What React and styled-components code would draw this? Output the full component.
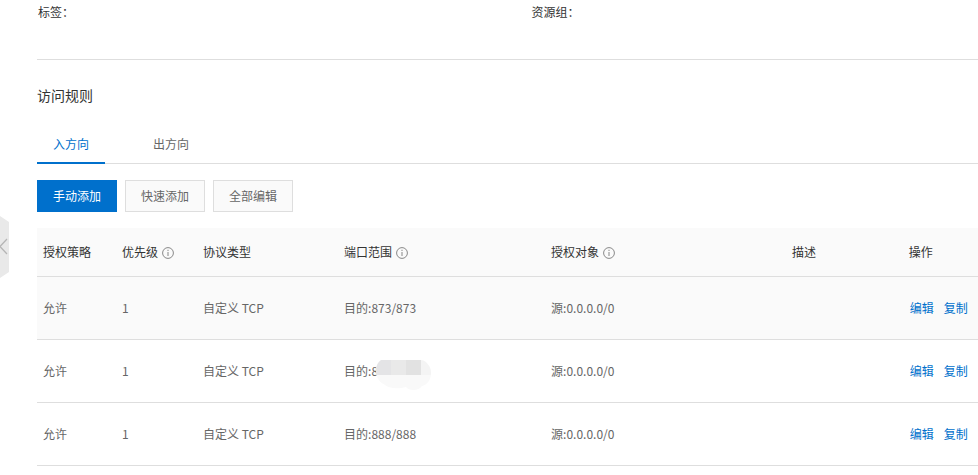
import React, { useState } from "react";
import styled, { createGlobalStyle } from "styled-components";

const GlobalStyle = createGlobalStyle`
	* {
		box-sizing: border-box;
	}

	body {
		margin: 0;
		background: #fff;
		color: #333;
		font-family: "Noto Sans CJK SC", sans-serif;
		font-size: 12px;
		line-height: 18px;
	}

	button {
		font-family: inherit;
		font-size: inherit;
		line-height: inherit;
		cursor: pointer;
	}
`;

// --------------------------------------------------

const Page = styled.div`
	position: relative;
	padding-left: 37px;
`;

const CollapseButton = styled.button`
	position: absolute;
	top: 216px;
	left: 0;
	padding: 0;
	border: 0;
	background: none;

	svg {
		display: block;
	}
`;

const Details = styled.dl`
	display: grid;
	grid-template-columns: 21fr 19fr;
	margin: 0;
	padding: 3px 0 38px 1px;
	border-bottom: 1px solid #dedede;
`;

const DetailLabel = styled.dt`
	color: #333;
`;

const Title = styled.h2`
	margin: 25px 0 21px;
	font-size: 14px;
	font-weight: 400;
	line-height: 20px;
`;

const Tabs = styled.div`
	display: flex;
	gap: 32px;
	border-bottom: 1px solid #dedede;
`;

const Tab = styled.button`
	margin-bottom: -1px;
	padding: 9px 16px;
	border: 0;
	border-bottom: 2px solid ${({ $active }) => ($active ? "#0070cc" : "transparent")};
	background: none;
	color: ${({ $active }) => ($active ? "#0070cc" : "#666")};
`;

const Toolbar = styled.div`
	display: flex;
	gap: 8px;
	padding: 16px 0;
`;

const Button = styled.button`
	padding: 6px 15px;
	border: 1px solid ${({ $primary }) => ($primary ? "#0070cc" : "#dedede")};
	background: ${({ $primary }) => ($primary ? "#0070cc" : "#fafafa")};
	color: ${({ $primary }) => ($primary ? "#fff" : "#666")};
`;

// --------------------------------------------------

const Table = styled.table`
	width: 100%;
	table-layout: fixed;
	border-collapse: separate;
	border-spacing: 0;
`;

const HeadCell = styled.th`
	width: ${({ $width }) => $width};
	padding: 15px 0 15px 6px;
	border-bottom: 1px solid #dedede;
	background: #fafafa;
	font-weight: 400;
	text-align: left;
	white-space: nowrap;
`;

const HeadLabel = styled.span`
	display: flex;
	align-items: center;
	gap: 4px;

	svg {
		margin-top: 2px;
	}
`;

const Row = styled.tr`
	background: ${({ $highlighted }) => ($highlighted ? "#fafafa" : "#fff")};
`;

const Cell = styled.td`
	padding: 22px 0 22px 6px;
	border-bottom: 1px solid #dedede;
	color: #666;
	white-space: nowrap;
`;

const Actions = styled.div`
	display: flex;
	gap: 10px;
	padding-left: 1px;
`;

const ActionLink = styled.a`
	color: #0070cc;
	text-decoration: none;
`;

const PortRange = styled.span`
	position: relative;
`;

const Mosaic = styled.svg`
	position: absolute;
	top: -2px;
	left: 100%;
	margin-left: -2px;
`;

// --------------------------------------------------

const InfoIcon = () => (
	<svg width="12" height="12" viewBox="0 0 12 12" fill="none" aria-hidden="true">
		<circle cx="6" cy="6" r="5.4" stroke="#888" strokeWidth="1" />
		<path d="M6 5v4" stroke="#999" strokeWidth="1.2" />
		<path d="M6 2.8v1.2" stroke="#999" strokeWidth="1.2" />
	</svg>
);

const HandleIcon = () => (
	<svg width="9" height="62" viewBox="0 0 9 62" fill="none" aria-hidden="true">
		<path d="M0 0L9 6V56L0 62Z" fill="#e9e9e9" />
		<path d="M7 23L0 30.5L7 38" stroke="#b5b5b5" strokeWidth="1.2" />
	</svg>
);

const MaskedValue = () => (
	<Mosaic width="55" height="30" viewBox="0 0 55 30" aria-hidden="true">
		<clipPath id="mosaic">
			<path d="M5 0H45C51 1 55 7 55 13C55 20 51 25 46 26C43 31 33 31 30 27C23 29 14 29 9 25C3 22 0 17 0 12C0 7 1 3 5 0Z" />
		</clipPath>
		<g clipPath="url(#mosaic)" shapeRendering="crispEdges">
			<path d="M0 0H55V30H0Z" fill="#f9f9f9" />
			<path d="M0 0H15V15H0Z" fill="#e4e4e6" />
			<path d="M15 0H30V15H15Z" fill="#e9e9e9" />
			<path d="M30 0H45V15H30Z" fill="#e2e2e2" />
			<path d="M45 0H55V15H45Z" fill="#f4f4f4" />
		</g>
	</Mosaic>
);

// --------------------------------------------------

const columns = [
	{ label: "授权策略", width: "8.4%" },
	{ label: "优先级", width: "8.6%", info: true },
	{ label: "协议类型", width: "15%" },
	{ label: "端口范围", width: "22%", info: true },
	{ label: "授权对象", width: "25.6%", info: true },
	{ label: "描述", width: "12.4%" },
	{ label: "操作", width: "8%" },
];

const rules = [
	{ id: 1, port: "目的:873/873", highlighted: true },
	{ id: 2, port: "目的:8", masked: true },
	{ id: 3, port: "目的:888/888" },
];

const RuleRow = ({ port, masked, highlighted }) => (
	<Row $highlighted={highlighted}>
		<Cell>允许</Cell>
		<Cell>1</Cell>
		<Cell>自定义 TCP</Cell>
		<Cell>
			<PortRange>
				{port}
				{masked && <MaskedValue />}
			</PortRange>
		</Cell>
		<Cell>源:0.0.0.0/0</Cell>
		<Cell />
		<Cell>
			<Actions>
				<ActionLink href="#edit">编辑</ActionLink>
				<ActionLink href="#copy">复制</ActionLink>
			</Actions>
		</Cell>
	</Row>
);

// --------------------------------------------------

const App = () => {
	const [tab, setTab] = useState("入方向");

	return (
		<Page>
			<GlobalStyle />

			<CollapseButton type="button" aria-label="收起">
				<HandleIcon />
			</CollapseButton>

			<Details>
				<DetailLabel>标签：</DetailLabel>
				<DetailLabel>资源组：</DetailLabel>
			</Details>

			<Title>访问规则</Title>

			<Tabs role="tablist">
				{["入方向", "出方向"].map(name => (
					<Tab
						key={name}
						type="button"
						role="tab"
						aria-selected={tab === name}
						$active={tab === name}
						onClick={() => setTab(name)}
					>
						{name}
					</Tab>
				))}
			</Tabs>

			<Toolbar>
				<Button type="button" $primary>手动添加</Button>
				<Button type="button">快速添加</Button>
				<Button type="button">全部编辑</Button>
			</Toolbar>

			<Table>
				<thead>
					<tr>
						{columns.map(({ label, width, info }) => (
							<HeadCell key={label} scope="col" $width={width}>
								<HeadLabel>
									{label}
									{info && <InfoIcon />}
								</HeadLabel>
							</HeadCell>
						))}
					</tr>
				</thead>
				<tbody>
					{rules.map(rule => (
						<RuleRow key={rule.id} {...rule} />
					))}
				</tbody>
			</Table>
		</Page>
	);
};

export default App;
